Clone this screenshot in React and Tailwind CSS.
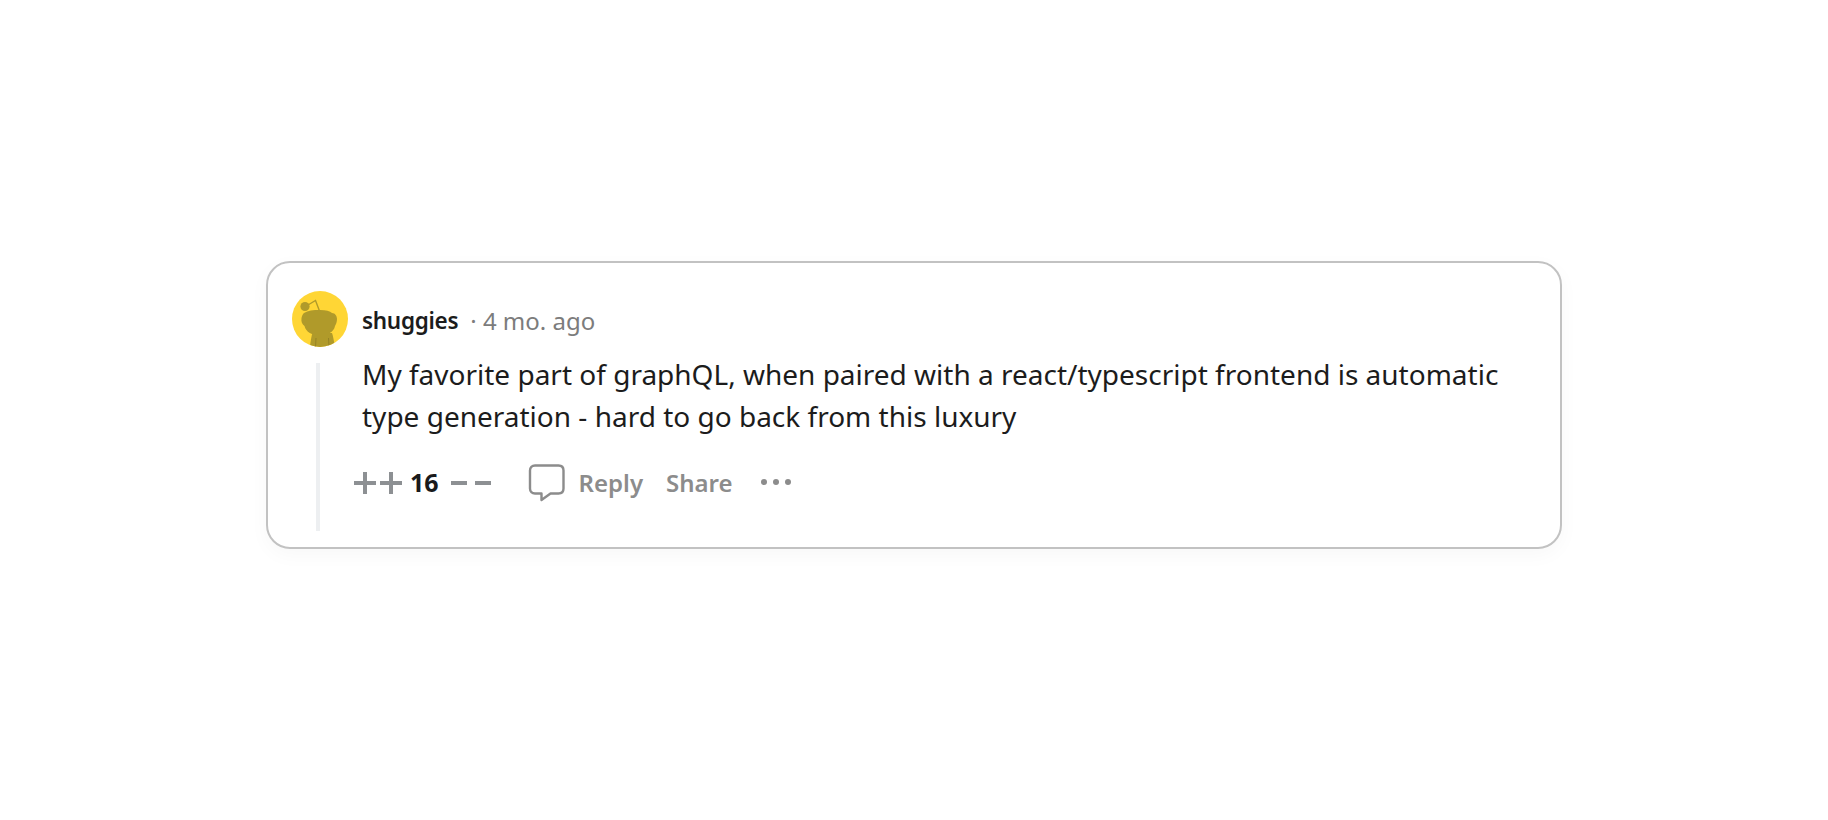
import React from "react";

const Avatar = () => (
  <svg width="56" height="56" viewBox="0 0 56 56" className="shrink-0">
    <defs>
      <clipPath id="avatar-clip">
        <circle cx="28" cy="28" r="28" />
      </clipPath>
    </defs>
    <circle cx="28" cy="28" r="28" fill="#ffd635" />
    <g clipPath="url(#avatar-clip)" fill="#b09a2a">
      <path d="M16 14 L23.500 9.500 L27.500 20" fill="none" stroke="#b09a2a" strokeWidth="1.400" />
      <circle cx="13" cy="15.500" r="4.600" />
      <path d="M12 22 C16 19.500 21 19 28 19 C34 19 38 20 40 22 C43 22 45 25 45 28 C45 31 44 33 43 35 C42 41 35 44.500 28 44.500 C20 44.500 14 41 12.500 35 C10 33 9 31 9.500 27 C10 25 10.500 23 12 22 Z" />
      <path d="M20.500 42 L40 42 C41 45 42 50 43 56 L18 56 C18.500 50 19.500 45 20.500 42 Z" />
      <path d="M24 47 L23.500 56 M36.500 47 L37 56" stroke="#8f7c24" strokeWidth="0.800" fill="none" />
    </g>
  </svg>
);

const PlusIcon = () => (
  <svg width="22" height="22" viewBox="0 0 22 22" className="shrink-0">
    <path d="M11 0 V22 M0 11 H22" stroke="#8d9093" strokeWidth="4" fill="none" />
  </svg>
);

const MinusIcon = () => (
  <div className="w-[16px] h-[4px] bg-[#8d9093]" />
);

const ReplyIcon = () => (
  <svg width="38" height="38" viewBox="0 0 38 38" className="shrink-0">
    <path
      d="M7 1.500 H30.500 C33.500 1.500 35.500 3.500 35.500 6.500 V24.500 C35.500 27.500 33.500 29.500 30.500 29.500 H22.500 L13.500 36 V29.500 H7 C4 29.500 2 27.500 2 24.500 V6.500 C2 3.500 4 1.500 7 1.500 Z"
      fill="none"
      stroke="#8c8c8c"
      strokeWidth="2.400"
      strokeLinejoin="round"
    />
  </svg>
);

export default function App() {
  return (
    <div className="flex items-center justify-center w-full h-screen bg-white font-['Noto_Sans',sans-serif]">
      <div className="w-[1296px] h-[288px] -mt-[10px] rounded-[24px] border-2 border-[#c2c2c2] bg-white shadow-[0_6px_20px_rgba(0,0,0,0.03)] pt-[28px] pl-[24px] pr-[24px]">
        <div className="flex items-center h-[56px]">
          <Avatar />
          <span className="ml-[14px] text-[22.500px] font-semibold tracking-[-0.3px] text-[#1c1c1c] mt-[3px]">shuggies</span>
          <span className="ml-[12px] text-[24px] text-[#7c7c7c] mt-[3px]">· 4 mo. ago</span>
        </div>
        <div className="flex mt-[16px] h-[168px]">
          <div className="w-[4px] h-full ml-[24px] bg-[#edeff1]" />
          <div className="flex flex-col ml-[42px]">
            <p className="text-[28px] leading-[42px] text-[#1c1c1c] w-[1160px] -mt-[10px]">
              My favorite part of graphQL, when paired with a react/typescript frontend is automatic type generation - hard to go back from this luxury
            </p>
            <div className="flex items-center mt-[27px] -ml-[8px] h-[38px]">
              <div className="flex items-center gap-[4px]">
                <PlusIcon />
                <PlusIcon />
              </div>
              <span className="ml-[8px] text-[25px] font-bold text-[#1a1a1b]">16</span>
              <div className="flex items-center gap-[8px] ml-[12px]">
                <MinusIcon />
                <MinusIcon />
              </div>
              <div className="ml-[37px]"><ReplyIcon /></div>
              <span className="ml-[13px] text-[24px] font-semibold text-[#8c8c8c]">Reply</span>
              <span className="ml-[23px] text-[24px] font-semibold text-[#8c8c8c]">Share</span>
              <div className="flex items-center gap-[6px] ml-[28px] -mt-[3px]">
                <div className="w-[6px] h-[6px] rounded-full bg-[#8c8c8c]" />
                <div className="w-[6px] h-[6px] rounded-full bg-[#8c8c8c]" />
                <div className="w-[6px] h-[6px] rounded-full bg-[#8c8c8c]" />
              </div>
            </div>
          </div>
        </div>
      </div>
    </div>
  );
}
